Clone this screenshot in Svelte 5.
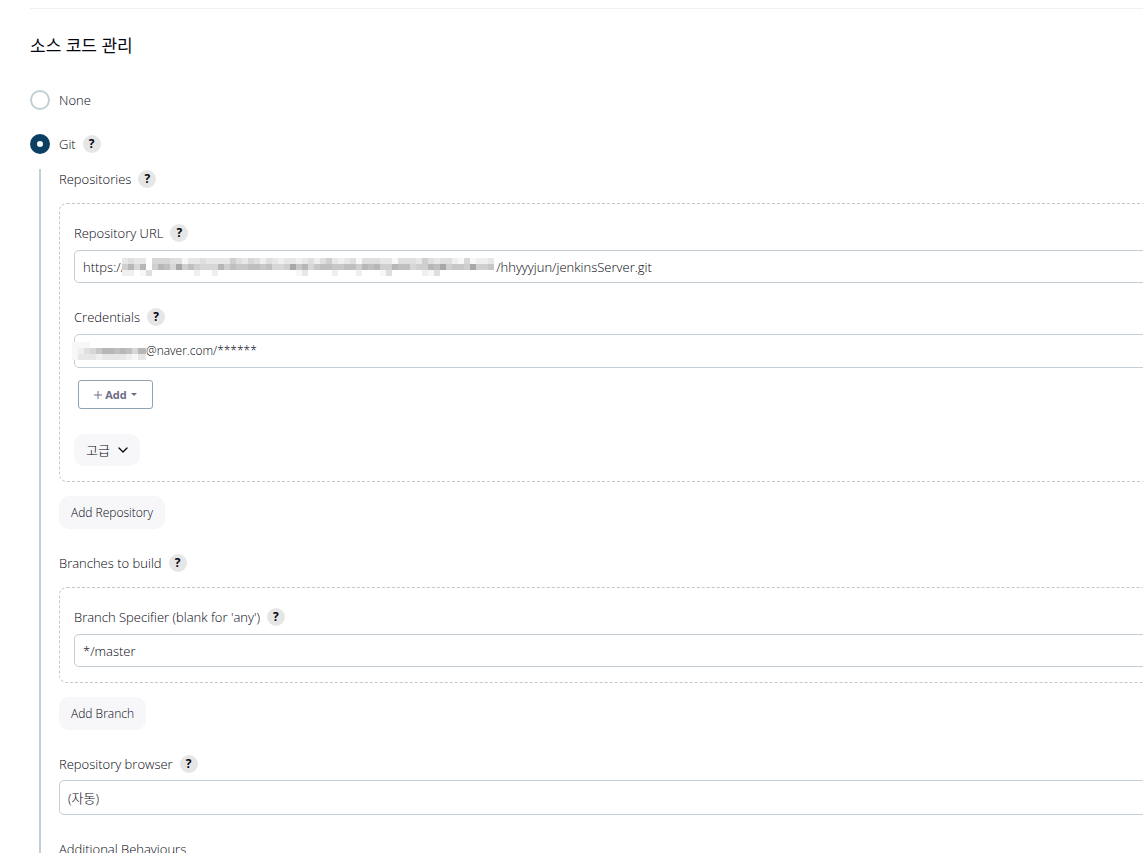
<script lang="ts">
  let scm = $state('git');
  let repoPath = $state('/hhyyyjun/jenkinsServer.git');
  let branch = $state('*/master');

  // One hex digit per 6px tile: 0 is white, f is the darkest grey.
  const urlMask = [
    '34330555441334333364354243233234246323414443314443643442151223',
    '695906985b686555968778878556b795788778869896698856698b6776b667',
    '22014000000020020000000000000130000200020001400000214000000000',
  ];
  const userMask = ['1110000000000', '1245799898599', '1333233332133'];

  function tiles(rows: string[]) {
    return rows.flatMap((row, y) =>
      [...row].map((c, x) => ({ x: x * 6, y: y * 6, g: 255 - parseInt(c, 16) * 8 })).filter((t) => t.g < 255)
    );
  }
</script>

{#snippet help(topic: string)}
  <button class="help" type="button" aria-label="Help for {topic}">?</button>
{/snippet}

{#snippet mosaic(rows: string[], width: number)}
  <svg class="mosaic" width={width} height="18" aria-hidden="true" shape-rendering="crispEdges">
    <rect width={width} height="18" fill="#fff" />
    {#each tiles(rows) as t}
      <rect x={t.x} y={t.y} width="6" height="6" fill="rgb({t.g},{t.g},{Math.min(255, t.g + 1)})" />
    {/each}
  </svg>
{/snippet}

<main>
  <form class="page">
    <h2>소스 코드 관리</h2>

    <div class="choice">
      <input type="radio" id="scm-none" name="scm" value="none" bind:group={scm} />
      <label for="scm-none">None</label>
    </div>
    <div class="choice">
      <input type="radio" id="scm-git" name="scm" value="git" bind:group={scm} />
      <label for="scm-git">Git</label>
      {@render help('Git')}
    </div>

    <div class="nested">
      <div class="row"><span>Repositories</span>{@render help('Repositories')}</div>
      <section class="box">
        <div class="row"><label for="url">Repository URL</label>{@render help('Repository URL')}</div>
        <div class="field">
          <span>https://</span>
          {@render mosaic(urlMask, 374)}
          <input id="url" type="text" bind:value={repoPath} />
        </div>

        <div class="row spaced"><label for="credentials">Credentials</label>{@render help('Credentials')}</div>
        <div class="field credentials">
          {@render mosaic(userMask, 74)}
          <select id="credentials">
            <option>@naver.com/******</option>
          </select>
        </div>
        <button class="add" type="button">
          <svg width="8" height="8" viewBox="0 0 8 8" aria-hidden="true"><path d="M4 0v8M0 4h8" stroke="currentColor" fill="none" /></svg>
          Add
          <svg class="caret" width="6" height="3" viewBox="0 0 6 3" aria-hidden="true"><path d="M0 0h6L3 3z" fill="currentColor" /></svg>
        </button>
        <button class="soft advanced" type="button">
          고급
          <svg width="10" height="6" viewBox="0 0 10 6" aria-hidden="true"><path d="M1 1l4 4 4-4" fill="none" stroke="currentColor" stroke-width="1.3" stroke-linecap="round" stroke-linejoin="round" /></svg>
        </button>
      </section>
      <button class="soft" type="button">Add Repository</button>

      <div class="row section"><span>Branches to build</span>{@render help('Branches to build')}</div>
      <section class="box">
        <div class="row"><label for="branch">Branch Specifier (blank for 'any')</label>{@render help('Branch Specifier')}</div>
        <div class="field"><input id="branch" type="text" bind:value={branch} /></div>
      </section>
      <button class="soft" type="button">Add Branch</button>

      <div class="row section"><label for="browser">Repository browser</label>{@render help('Repository browser')}</div>
      <div class="field browser">
        <select id="browser">
          <option>(자동)</option>
        </select>
      </div>

      <div class="row section">Additional Behaviours</div>
    </div>
  </form>
</main>

<style>
  :global(body) {
    background: #fff;
  }
  main {
    height: 100vh;
    overflow: hidden;
    color: #05050f;
    font: 300 13px/20px 'Open Sans', 'Noto Sans CJK KR', sans-serif;
  }
  .page {
    margin: 8px -32px 0 30px;
    border-top: 1px solid #f0f0f2;
  }
  h2 {
    margin: 25px 0 32px;
    font-size: 17px;
    line-height: 24px;
    font-weight: 400;
  }
  input,
  select,
  button {
    font: inherit;
    color: inherit;
    margin: 0;
  }
  .choice {
    display: flex;
    align-items: center;
    height: 20px;
    margin-bottom: 24px;
  }
  .choice label {
    margin-left: 9px;
  }
  .choice input {
    appearance: none;
    box-sizing: border-box;
    width: 20px;
    height: 20px;
    border: 2px solid #c3cfd4;
    border-radius: 50%;
  }
  .choice input:checked {
    border: 7px solid #0b4064;
  }
  .help {
    width: 18px;
    height: 18px;
    margin-left: 7px;
    padding: 0;
    border: 0;
    border-radius: 50%;
    background: #e6e6e6;
    font-weight: 700;
    font-size: 12px;
    line-height: 18px;
  }
  .nested {
    display: flex;
    flex-direction: column;
    align-items: flex-start;
    margin: -9px 0 0 9px;
    padding: 0 0 40px 18px;
    border-left: 2px solid #c3cfd4;
  }
  .row {
    display: flex;
    align-items: center;
    height: 20px;
    white-space: nowrap;
  }
  .box {
    box-sizing: border-box;
    align-self: stretch;
    display: flex;
    flex-direction: column;
    align-items: flex-start;
    margin: 14px 0;
    padding: 19px 14px 15px;
    border: 1px dashed #c4c8ca;
    border-radius: 8px;
  }
  .field {
    box-sizing: border-box;
    align-self: stretch;
    display: flex;
    align-items: center;
    height: 33px;
    margin-top: 7px;
    padding-left: 8px;
    border: 1px solid #c3cfd4;
    border-radius: 5px;
    background: #fff;
  }
  .field input,
  .field select {
    flex: 1;
    min-width: 0;
    padding: 0;
    border: 0;
    outline: 0;
    background: none;
    appearance: none;
  }
  .mosaic {
    flex: none;
    margin-left: -3px;
  }
  .field.credentials {
    height: 34px;
    padding-left: 0;
  }
  .field.credentials select {
    font-size: 12px;
  }
  .field.browser {
    height: 35px;
    margin-top: 6px;
  }
  .spaced,
  .section {
    margin-top: 24px;
  }
  .add {
    display: flex;
    align-items: center;
    justify-content: center;
    gap: 3px;
    width: 75px;
    height: 29px;
    margin: 12px 4px 25px;
    padding: 0;
    border: 1px solid #8fa3b2;
    border-radius: 3px;
    background: #fff;
    color: #6f6c87;
    font-weight: 700;
    font-size: 11px;
  }
  .caret {
    margin-left: 1px;
  }
  .soft {
    display: flex;
    align-items: center;
    gap: 8px;
    height: 33px;
    padding: 0 12px;
    border: 0;
    border-radius: 10px;
    background: #f7f7fa;
    font-size: 12px;
  }
  .soft.advanced {
    height: 32px;
    font-size: 13px;
  }
</style>
